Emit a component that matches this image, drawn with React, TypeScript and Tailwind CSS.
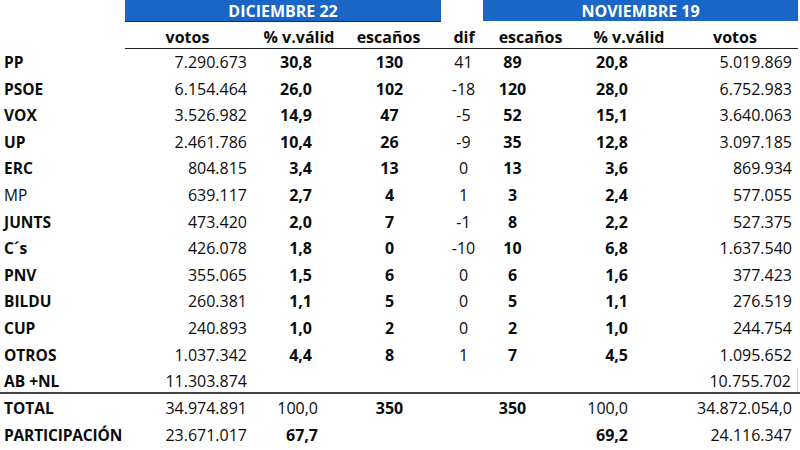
type Row = {
  name: string;
  boldName?: boolean;
  v1: string;
  p1: string;
  e1: string;
  dif: string;
  e2: string;
  p2: string;
  v2: string;
};

const rows: Row[] = [
  { name: 'PP', v1: '7.290.673', p1: '30,8', e1: '130', dif: '41', e2: '89', p2: '20,8', v2: '5.019.869' },
  { name: 'PSOE', v1: '6.154.464', p1: '26,0', e1: '102', dif: '-18', e2: '120', p2: '28,0', v2: '6.752.983' },
  { name: 'VOX', v1: '3.526.982', p1: '14,9', e1: '47', dif: '-5', e2: '52', p2: '15,1', v2: '3.640.063' },
  { name: 'UP', v1: '2.461.786', p1: '10,4', e1: '26', dif: '-9', e2: '35', p2: '12,8', v2: '3.097.185' },
  { name: 'ERC', v1: '804.815', p1: '3,4', e1: '13', dif: '0', e2: '13', p2: '3,6', v2: '869.934' },
  { name: 'MP', boldName: false, v1: '639.117', p1: '2,7', e1: '4', dif: '1', e2: '3', p2: '2,4', v2: '577.055' },
  { name: 'JUNTS', v1: '473.420', p1: '2,0', e1: '7', dif: '-1', e2: '8', p2: '2,2', v2: '527.375' },
  { name: 'C´s', v1: '426.078', p1: '1,8', e1: '0', dif: '-10', e2: '10', p2: '6,8', v2: '1.637.540' },
  { name: 'PNV', v1: '355.065', p1: '1,5', e1: '6', dif: '0', e2: '6', p2: '1,6', v2: '377.423' },
  { name: 'BILDU', v1: '260.381', p1: '1,1', e1: '5', dif: '0', e2: '5', p2: '1,1', v2: '276.519' },
  { name: 'CUP', v1: '240.893', p1: '1,0', e1: '2', dif: '0', e2: '2', p2: '1,0', v2: '244.754' },
  { name: 'OTROS', v1: '1.037.342', p1: '4,4', e1: '8', dif: '1', e2: '7', p2: '4,5', v2: '1.095.652' },
];

// column grid shared by every row (Excel-like fixed widths)
const cols = 'grid grid-cols-[125px_125px_98px_93px_42px_95px_102px_118px]';

// cell styles per column
const c = {
  name: 'pl-[4px] text-[15.5px]',
  v1: 'text-right pr-[3px]',
  p1: 'text-right pr-[36px]',
  p1Total: 'text-right pr-[30px]',
  e1: 'text-center pr-[10px]',
  dif: 'text-center pl-[3px]',
  e2: 'text-center pr-[36px]',
  p2: 'text-right pr-[52px]',
  v2: 'text-right pr-[6px]',
};

export default function App() {
  return (
    <div
      className="w-[800px] h-[450px] overflow-hidden bg-white text-[#0c0c0c] text-[16px] leading-[20px]"
      style={{ fontFamily: '"Open Sans", "Noto Sans", sans-serif' }}
    >
      {/* period bars */}
      <div className={`${cols} h-[22px]`}>
        <div />
        <div className="col-span-3 bg-[#1a66c6] border-b border-[#2a2a2a] pt-px text-center font-bold text-white">
          DICIEMBRE 22
        </div>
        <div />
        <div className="col-span-3 h-[21px] bg-[#1a66c6] pt-px text-center font-bold text-white">
          NOVIEMBRE 19
        </div>
      </div>

      {/* column headers */}
      <div className={`${cols} h-[27px] font-bold`}>
        <div />
        <div className="border-b border-[#222] pt-[4.8px] text-center">votos</div>
        <div className="border-b border-[#222] pt-[4.8px] text-center">% v.válid</div>
        <div className="border-b border-[#222] pt-[4.8px] text-center pr-[12px]">escaños</div>
        <div className="border-b border-[#222] pt-[4.8px] text-center pl-[4px]">dif</div>
        <div className="border-b border-[#222] pt-[4.8px] text-center">escaños</div>
        <div className="border-b border-[#222] pt-[4.8px] text-center">% v.válid</div>
        <div className="border-b border-[#222] pt-[4.8px] text-center pr-[8px]">votos</div>
      </div>

      {/* parties */}
      {rows.map((r) => (
        <div key={r.name} className={`${cols} h-[26.6px] pt-[3px]`}>
          <div className={`${c.name} ${r.boldName === false ? '' : 'font-bold'}`}>{r.name}</div>
          <div className={c.v1}>{r.v1}</div>
          <div className={`${c.p1} font-bold`}>{r.p1}</div>
          <div className={`${c.e1} font-bold`}>{r.e1}</div>
          <div className={c.dif}>{r.dif}</div>
          <div className={`${c.e2} font-bold`}>{r.e2}</div>
          <div className={`${c.p2} font-bold`}>{r.p2}</div>
          <div className={c.v2}>{r.v2}</div>
        </div>
      ))}

      {/* blank + nulls */}
      <div className={`${cols} h-[25.8px] pt-[3px] border-b-2 border-[#444]`}>
        <div className={`${c.name} font-bold`}>AB +NL</div>
        <div className={c.v1}>11.303.874</div>
        <div />
        <div />
        <div />
        <div />
        <div />
        <div className={`${c.v2} border-r border-[#cfcfcf] -mt-[3px] pt-[3px]`}>10.755.702</div>
      </div>

      {/* totals */}
      <div className={`${cols} h-[27px] pt-[4px]`}>
        <div className={`${c.name} font-bold`}>TOTAL</div>
        <div className={c.v1}>34.974.891</div>
        <div className={c.p1Total}>100,0</div>
        <div className={`${c.e1} font-bold`}>350</div>
        <div />
        <div className={`${c.e2} font-bold`}>350</div>
        <div className={c.p2}>100,0</div>
        <div className={c.v2}>34.872.054,0</div>
      </div>
      <div className={`${cols} h-[27px] pt-[4px]`}>
        <div className={`${c.name} font-bold tracking-[-0.01em]`}>PARTICIPACIÓN</div>
        <div className={c.v1}>23.671.017</div>
        <div className={`${c.p1Total} font-bold`}>67,7</div>
        <div />
        <div />
        <div />
        <div className={`${c.p2} font-bold`}>69,2</div>
        <div className={c.v2}>24.116.347</div>
      </div>
    </div>
  );
}
